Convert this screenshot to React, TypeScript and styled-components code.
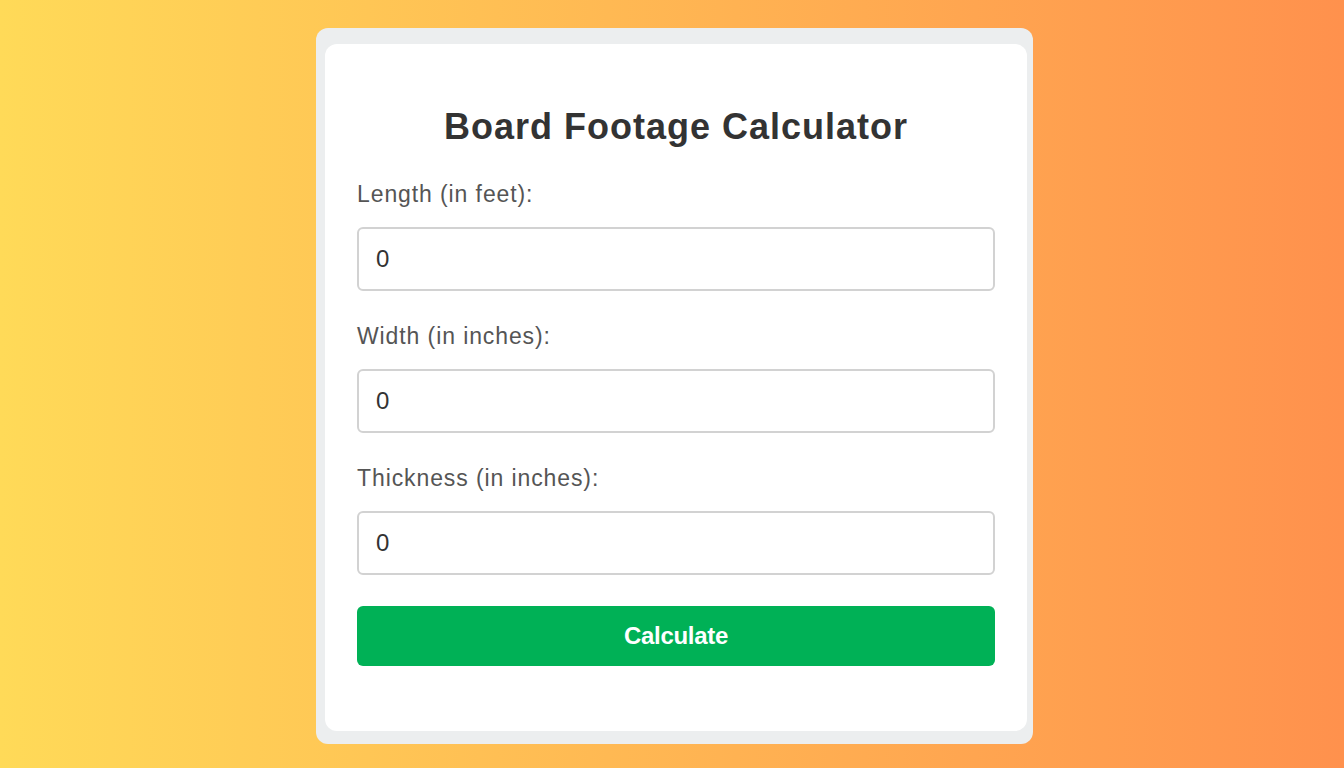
import styled, { createGlobalStyle } from 'styled-components'

const GlobalStyle = createGlobalStyle`
  html, body {
    margin: 0;
    padding: 0;
    height: 100%;
  }
  body {
    font-family: "Liberation Sans", Arial, sans-serif;
    background: linear-gradient(to right, #ffda58, #ff914d);
  }
`

const Page = styled.main`
  min-height: 768px;
  display: flex;
  justify-content: center;
  align-items: flex-start;
  padding: 28px 0 0 5px;
  box-sizing: border-box;
`

const Frame = styled.div`
  width: 717px;
  box-sizing: border-box;
  padding: 16px 6px 13px 9px;
  background: #eceeef;
  border-radius: 12px;
`

const Card = styled.section`
  background: #fff;
  border-radius: 12px;
  padding: 62px 32px 65px 32px;
`

const Title = styled.h2`
  margin: 0 0 33px;
  text-align: center;
  font-size: 36px;
  font-weight: 700;
  line-height: 41px;
  letter-spacing: 1px;
  color: #333;
`

const Field = styled.div`
  display: flex;
  flex-direction: column;
  margin-bottom: 31px;
`

const Label = styled.label`
  font-size: 23px;
  line-height: 28px;
  letter-spacing: 0.9px;
  color: #555;
  margin-bottom: 19px;
`

const Input = styled.input`
  height: 64px;
  box-sizing: border-box;
  border: 2px solid #d2d2d2;
  border-radius: 6px;
  padding: 0 17px;
  font-family: inherit;
  font-size: 24px;
  color: #333;
  outline: none;
`

const Button = styled.button`
  display: block;
  width: 100%;
  height: 60px;
  margin-top: 2px;
  border: none;
  border-radius: 6px;
  background: #00b156;
  color: #fff;
  font-family: inherit;
  font-size: 24px;
  font-weight: 700;
  letter-spacing: -0.3px;
  cursor: pointer;
`

const fields = [
  { id: 'length', label: 'Length (in feet):' },
  { id: 'width', label: 'Width (in inches):' },
  { id: 'thickness', label: 'Thickness (in inches):' },
]

function App() {
  return (
    <>
      <GlobalStyle />
      <Page>
        <Frame>
          <Card>
            <Title>Board Footage Calculator</Title>
            {fields.map((f) => (
              <Field key={f.id}>
                <Label htmlFor={f.id}>{f.label}</Label>
                <Input id={f.id} type="number" defaultValue={0} />
              </Field>
            ))}
            <Button>Calculate</Button>
          </Card>
        </Frame>
      </Page>
    </>
  )
}

export default App
